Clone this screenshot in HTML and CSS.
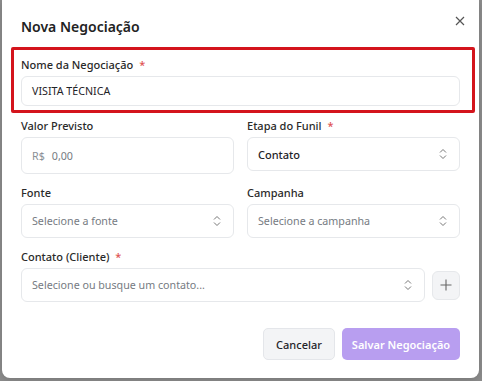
FILE: index.html
```html
<!DOCTYPE html>
<html lang="pt">
<head>
<meta charset="utf-8">
<link rel="stylesheet" href="styles.css">
</head>
<body>
<div class="modal">
  <div class="header">
    <h1 class="title">Nova Negociação</h1>
    <button class="close" aria-label="Fechar">
      <svg width="10" height="10" viewBox="0 0 10 10"><path d="M1 1L9 9M9 1L1 9" stroke="#555" stroke-width="1.2" fill="none"/></svg>
    </button>
  </div>
  <div class="form">
    <div class="field full highlight">
      <label class="label">Nome da Negociação <span class="req">*</span></label>
      <div class="input h30"><span class="value">VISITA TÉCNICA</span></div>
      <div class="focus-ring"></div>
    </div>
    <div class="field">
      <label class="label">Valor Previsto</label>
      <div class="input h37"><span class="prefix">R$</span><span class="ph">0,00</span></div>
    </div>
    <div class="field">
      <label class="label">Etapa do Funil <span class="req">*</span></label>
      <div class="input select h34"><span class="value strong">Contato</span>
        <svg class="chev" width="8" height="12" viewBox="0 0 8 12"><path d="M1 4.5L4 1.5L7 4.5M1 7.5L4 10.5L7 7.5" stroke="#777" stroke-width="1" fill="none"/></svg>
      </div>
    </div>
    <div class="field">
      <label class="label">Fonte</label>
      <div class="input select h34"><span class="ph">Selecione a fonte</span>
        <svg class="chev" width="8" height="12" viewBox="0 0 8 12"><path d="M1 4.5L4 1.5L7 4.5M1 7.5L4 10.5L7 7.5" stroke="#777" stroke-width="1" fill="none"/></svg>
      </div>
    </div>
    <div class="field">
      <label class="label">Campanha</label>
      <div class="input select h34"><span class="ph">Selecione a campanha</span>
        <svg class="chev" width="8" height="12" viewBox="0 0 8 12"><path d="M1 4.5L4 1.5L7 4.5M1 7.5L4 10.5L7 7.5" stroke="#777" stroke-width="1" fill="none"/></svg>
      </div>
    </div>
    <div class="field full">
      <label class="label">Contato (Cliente) <span class="req">*</span></label>
      <div class="contact-row">
        <div class="input select h34 grow"><span class="ph">Selecione ou busque um contato...</span>
          <svg class="chev" width="8" height="12" viewBox="0 0 8 12"><path d="M1 4.5L4 1.5L7 4.5M1 7.5L4 10.5L7 7.5" stroke="#777" stroke-width="1" fill="none"/></svg>
        </div>
        <button class="add" aria-label="Adicionar">
          <svg width="12" height="12" viewBox="0 0 12 12"><path d="M6 0.5V11.5M0.5 6H11.5" stroke="#666" stroke-width="1.1" fill="none"/></svg>
        </button>
      </div>
    </div>
  </div>
  <div class="footer">
    <button class="btn cancel">Cancelar</button>
    <button class="btn save">Salvar Negociação</button>
  </div>
</div>
</body>
</html>
```
FILE: styles.css
```css
* { box-sizing: border-box; }
html, body { margin: 0; padding: 0; }
body {
  width: 482px;
  height: 381px;
  background: #8c8c8c;
  font-family: "Noto Sans", "Open Sans", sans-serif;
  color: #1f2328;
  overflow: hidden;
}
.modal {
  position: relative;
  margin-left: 2px;
  width: 477px;
  height: 378px;
  background: #fff;
  border-radius: 0 0 8px 8px;
  padding: 0 19px;
  box-shadow: 0 2px 8px rgba(0,0,0,0.15);
}
.header {
  height: 57px;
  display: flex;
  align-items: flex-start;
  justify-content: space-between;
}
.title {
  margin: 17px 0 0 0;
  font-size: 14px;
  line-height: 20px;
  font-weight: 600;
  color: #222;
}
.close {
  margin: 14px -7px 0 0;
  width: 14px;
  height: 14px;
  padding: 0;
  border: none;
  background: none;
  display: flex;
  align-items: center;
  justify-content: center;
}
.form {
  display: grid;
  grid-template-columns: 213px 213px;
  column-gap: 13px;
  row-gap: 11px;
  align-items: start;
}
.field { position: relative; display: flex; flex-direction: column; }
.field.full { grid-column: 1 / -1; }
.field.highlight { margin-bottom: 1px; }
.focus-ring {
  position: absolute;
  left: -10px;
  right: -15px;
  top: -10px;
  bottom: -7px;
  border: 3px solid #d4141c;
  border-radius: 2px;
  pointer-events: none;
}
.label {
  height: 16px;
  line-height: 16px;
  font-size: 11px;
  font-weight: 500;
  color: #2a2a2a;
  margin-bottom: 3px;
}
.req { color: #e05252; margin-left: 3px; }
.input {
  display: flex;
  align-items: center;
  border: 1px solid #e6e8eb;
  border-radius: 6px;
  padding: 0 10px;
  font-size: 10.7px;
  background: #fff;
}
.h30 { height: 30px; }
.h37 { height: 37px; }
.h34 { height: 34px; }
.select { justify-content: space-between; padding-right: 12px; }
.value { color: #1f2328; }
.value.strong { font-weight: 500; font-size: 11px; }
.ph { color: #767b82; }
.prefix { color: #8a8f96; margin-right: 7px; }
.chev { flex: none; }
.contact-row { display: flex; align-items: center; gap: 7px; }
.grow { flex: 1; }
.add {
  width: 28px;
  height: 29px;
  border: 1px solid #e6e8eb;
  border-radius: 6px;
  background: #f3f4f6;
  padding: 0;
  display: flex;
  align-items: center;
  justify-content: center;
}
.footer {
  display: flex;
  justify-content: flex-end;
  gap: 7px;
  margin-top: 26px;
}
.btn {
  height: 32px;
  border-radius: 5px;
  font-family: inherit;
  font-size: 11px;
  font-weight: 600;
  padding: 0;
}
.cancel {
  width: 72px;
  background: #f3f4f6;
  border: 1px solid #e4e6ea;
  color: #1f2328;
  font-weight: 500;
}
.save {
  width: 118px;
  background: #b89ef0;
  border: none;
  color: #fff;
}
```
